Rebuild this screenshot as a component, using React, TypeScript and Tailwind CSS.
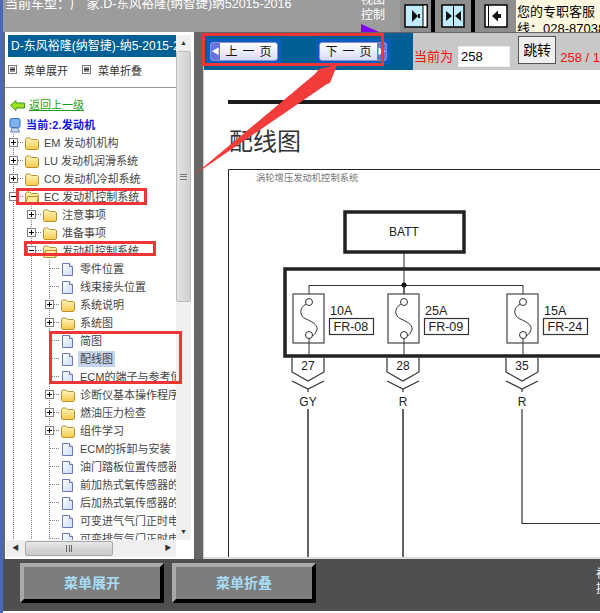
type TreeRow = {
  level: number;
  toggle?: "plus" | "minus";
  icon: "folder" | "open" | "doc";
  label: string;
  selected?: boolean;
};

const rows: TreeRow[] = [
  { level: 0, toggle: "plus", icon: "folder", label: "EM 发动机机构" },
  { level: 0, toggle: "plus", icon: "folder", label: "LU 发动机润滑系统" },
  { level: 0, toggle: "plus", icon: "folder", label: "CO 发动机冷却系统" },
  { level: 0, toggle: "minus", icon: "open", label: "EC 发动机控制系统" },
  { level: 1, toggle: "plus", icon: "folder", label: "注意事项" },
  { level: 1, toggle: "plus", icon: "folder", label: "准备事项" },
  { level: 1, toggle: "minus", icon: "open", label: "发动机控制系统" },
  { level: 2, icon: "doc", label: "零件位置" },
  { level: 2, icon: "doc", label: "线束接头位置" },
  { level: 2, toggle: "plus", icon: "folder", label: "系统说明" },
  { level: 2, toggle: "plus", icon: "folder", label: "系统图" },
  { level: 2, icon: "doc", label: "简图" },
  { level: 2, icon: "doc", label: "配线图", selected: true },
  { level: 2, icon: "doc", label: "ECM的端子与参考值" },
  { level: 2, toggle: "plus", icon: "folder", label: "诊断仪基本操作程序" },
  { level: 2, toggle: "plus", icon: "folder", label: "燃油压力检查" },
  { level: 2, toggle: "plus", icon: "folder", label: "组件学习" },
  { level: 2, icon: "doc", label: "ECM的拆卸与安装" },
  { level: 2, icon: "doc", label: "油门踏板位置传感器的" },
  { level: 2, icon: "doc", label: "前加热式氧传感器的检" },
  { level: 2, icon: "doc", label: "后加热式氧传感器的检" },
  { level: 2, icon: "doc", label: "可变进气气门正时电磁" },
  { level: 2, icon: "doc", label: "可变排气气门正时电磁" },
];

function GuideCell() {
  return (
    <svg width="18" height="18" className="shrink-0">
      <line x1="8.5" y1="0" x2="8.5" y2="18" stroke="#808080" strokeDasharray="1 1" />
    </svg>
  );
}

function ToggleCell({ toggle }: { toggle?: "plus" | "minus" }) {
  return (
    <svg width="18" height="18" className="shrink-0">
      <line x1="8.5" y1="0" x2="8.5" y2="18" stroke="#808080" strokeDasharray="1 1" />
      <line x1="9" y1="8.5" x2="18" y2="8.5" stroke="#808080" strokeDasharray="1 1" />
      {toggle && (
        <g>
          <rect x="4.5" y="4.5" width="8" height="8" fill="#fff" stroke="#808080" />
          <line x1="6" y1="8.5" x2="11" y2="8.5" stroke="#000" />
          {toggle === "plus" && <line x1="8.5" y1="6" x2="8.5" y2="11" stroke="#000" />}
        </g>
      )}
    </svg>
  );
}

function FolderIcon({ open }: { open?: boolean }) {
  return (
    <svg width="14" height="13" viewBox="0 0 14 13" className="shrink-0 ml-[2px]">
      <defs>
        <linearGradient id="fold" x1="0" y1="0" x2="0" y2="1">
          <stop offset="0" stopColor="#fff6c0" />
          <stop offset="1" stopColor="#f5c94a" />
        </linearGradient>
      </defs>
      <path d="M0.5 3 L1.5 1 H5 L6.5 2.5 H12.5 L13.5 3.5 V11.5 L12.5 12.5 H1.5 L0.5 11.5 Z" fill="url(#fold)" stroke="#b8912c" />
      {open && <path d="M0.5 12 L3 5.5 H13.5 L12 12.5 H1.5 Z" fill="#ffeea0" stroke="#b8912c" />}
    </svg>
  );
}

function DocIcon() {
  return (
    <svg width="14" height="13" viewBox="0 0 14 13" className="shrink-0 ml-[2px]">
      <defs>
        <linearGradient id="page" x1="0" y1="0" x2="1" y2="1">
          <stop offset="0" stopColor="#ffffff" />
          <stop offset="1" stopColor="#c4dcf8" />
        </linearGradient>
      </defs>
      <path d="M1.5 0.5 H8.5 L11.5 3.5 V12.5 H1.5 Z" fill="url(#page)" stroke="#6a78b8" />
      <path d="M8.5 0.5 V3.5 H11.5" fill="#fff" stroke="#6a78b8" />
    </svg>
  );
}

function Row({ row }: { row: TreeRow }) {
  return (
    <div className="flex items-center h-[18px] whitespace-nowrap">
      {row.level > 0 && <GuideCell />}
      {row.level > 1 && <GuideCell />}
      <ToggleCell toggle={row.toggle} />
      {row.icon === "doc" ? <DocIcon /> : <FolderIcon open={row.icon === "open"} />}
      <span className={row.selected ? "ml-[3px] px-[2px] bg-[#c5d5ee] text-[#444]" : "ml-[5px] text-[#444]"}>
        {row.label}
      </span>
    </div>
  );
}

function MenuGlyph() {
  return (
    <svg width="9" height="9" className="shrink-0">
      <rect x="0.5" y="0.5" width="8" height="8" fill="#fff" stroke="#777" />
      <path d="M2 3H7M2 4.5H7M2 6H7" stroke="#222" />
    </svg>
  );
}

function SideButton({ dir }: { dir: "right" | "both" | "left" }) {
  return (
    <svg width="24" height="24" viewBox="0 0 24 24">
      <rect x="1" y="1" width="22" height="22" fill={dir === "left" ? "#fff" : "#c0ecff"} stroke="#000" strokeWidth="1.5" />
      {dir === "right" && (
        <g>
          <rect x="19" y="1" width="4" height="22" fill="#fff" stroke="#000" strokeWidth="1" />
          <path d="M14 6 L8 12 L14 18Z M8 10H6V14H8Z" transform="translate(22 0) scale(-1 1)" fill="#111" />
        </g>
      )}
      {dir === "both" && (
        <g>
          <line x1="12.5" y1="1" x2="12.5" y2="23" stroke="#000" />
          <path d="M5 7 L11 12 L5 17Z M14 12 L20 7 V17Z" fill="#111" />
        </g>
      )}
      {dir === "left" && (
        <g>
          <line x1="4.5" y1="1" x2="4.5" y2="23" stroke="#000" />
          <path d="M8 12 L14 6.5 V10H17V14H14V17.5Z" fill="#111" />
        </g>
      )}
    </svg>
  );
}

function PageButton({ label, arrow }: { label: string; arrow: "left" | "right" }) {
  return (
    <div className="p-[3px] bg-[#0a5cc0]">
      <div className="flex items-center w-[68px] h-[19px] rounded-[3px] border border-[#8a90d8] bg-gradient-to-b from-[#ffffff] to-[#d8dcf6] text-[12px] text-[#111] overflow-hidden">
        {arrow === "left" && <span className="flex items-center justify-center w-[9px] h-full bg-[#6a72e0] text-white text-[8px]">◀</span>}
        <span className="flex-1 pl-[5px] text-center tracking-[5px]">{label}</span>
        {arrow === "right" && <span className="flex items-center justify-center w-[9px] h-full bg-[#6a72e0] text-white text-[8px]">▶</span>}
      </div>
    </div>
  );
}

function Fuse({ x, amp, code, boxX, ampX }: { x: number; amp: string; code: string; boxX: number; ampX: number }) {
  const left = x - 16;
  return (
    <g>
      <line x1={x} y1="285" x2={x} y2="298" stroke="#333" />
      <rect x={left} y="294" width="31" height="49" fill="#fff" stroke="#444" strokeWidth="1.2" />
      <circle cx={x} cy="302" r="3.5" fill="#fff" stroke="#333" />
      <circle cx={x} cy="335" r="3.5" fill="#fff" stroke="#333" />
      <path d={`M${x - 3} 304 C${x - 10} 308 ${x - 10} 316 ${x - 3} 319 C${x + 4} 322 ${x + 11} 326 ${x + 7} 332 C${x + 6} 334 ${x + 5} 335 ${x + 3} 336`} fill="none" stroke="#333" />
      <line x1={x} y1="338" x2={x} y2="357" stroke="#333" />
      <text x={ampX} y="315" fontSize="12.5" fill="#222">{amp}</text>
      <rect x={boxX} y="318.5" width="44" height="16" fill="#fff" stroke="#333" strokeWidth="1.2" />
      <text x={boxX + 4} y="331" fontSize="12.5" fill="#222">{code}</text>
    </g>
  );
}

function Connector({ x, pin, wire }: { x: number; pin: string; wire: string }) {
  return (
    <g fill="none" stroke="#333" strokeWidth="1.2">
      <path d={`M${x - 16} 358 V372 L${x} 381 L${x + 16} 372 V358`} />
      <path d={`M${x - 16} 381 L${x} 389 L${x + 16} 381 M${x} 389 V392`} />
      <text x={x} y="370" fontSize="12" fill="#222" stroke="none" textAnchor="middle">{pin}</text>
      <text x={x} y="406" fontSize="12" fill="#222" stroke="none" textAnchor="middle">{wire}</text>
    </g>
  );
}

function WiringDiagram() {
  return (
    <svg viewBox="228 169 372 388" width="372" height="388" className="block font-['Liberation_Sans','Noto_Sans_CJK_SC',sans-serif]">
      <path d="M228.5 557 V169.5 H600" fill="none" stroke="#222" />
      <text x="256" y="181" fontSize="9.3" fill="#777">涡轮增压发动机控制系统</text>
      <rect x="345" y="212" width="119" height="40" fill="#fff" stroke="#222" strokeWidth="3.5" />
      <text x="404" y="236" fontSize="12" fill="#222" textAnchor="middle">BATT</text>
      <line x1="404" y1="252" x2="404" y2="268" stroke="#222" />
      <rect x="285" y="269" width="330" height="87" fill="#fff" stroke="#222" strokeWidth="3.5" />
      <line x1="309" y1="285.5" x2="523" y2="285.5" stroke="#333" />
      <line x1="404" y1="268" x2="404" y2="296" stroke="#333" />
      <circle cx="404" cy="285" r="2.5" fill="#111" />
      <Fuse x={309} amp="10A" code="FR-08" boxX={329.5} ampX={330} />
      <Fuse x={404} amp="25A" code="FR-09" boxX={424.5} ampX={425} />
      <Fuse x={523} amp="15A" code="FR-24" boxX={543.5} ampX={544} />
      <Connector x={308} pin="27" wire="GY" />
      <Connector x={403} pin="28" wire="R" />
      <Connector x={522} pin="35" wire="R" />
      <path d="M308 409 V557 M403 409 V557" fill="none" stroke="#222" strokeWidth="1.4" />
      <path d="M522 409 V523.5 H600" fill="none" stroke="#333" strokeWidth="1.2" />
    </svg>
  );
}

export default function App() {
  return (
    <div className="relative flex w-[600px] h-[613px] overflow-hidden bg-white text-[11px] font-['Liberation_Sans','Noto_Sans_CJK_SC',sans-serif]">
      <div className="w-[3px] shrink-0 bg-[#4a68b4]" />

      <div className="flex-1 min-w-0 flex flex-col">
        {/* top bar */}
        <div className="flex h-[32px] shrink-0 bg-[#9c9c9c] overflow-hidden">
          <div className="w-[358px] pl-[2px] -mt-[6px] text-[13px] text-white whitespace-nowrap leading-[20px]">
            当前车型：广 家.<span className="text-[12.5px]">D-东风裕隆(纳智捷)纳52015-2016</span>
          </div>
          <div className="w-[39px] -mt-[7px] text-[12px] leading-[15px] text-white">
            <div>视图</div>
            <div>控制</div>
            <svg width="18" height="9" className="mt-[1px]">
              <path d="M0 0 L18 8 V9 H0 Z" fill="#8000f0" />
            </svg>
          </div>
          <div className="flex items-center justify-center w-[31px] bg-[#8e8e8e]">
            <SideButton dir="right" />
          </div>
          <div className="w-[4px] bg-black" />
          <div className="flex items-center justify-center w-[36px] bg-[#8e8e8e]">
            <SideButton dir="both" />
          </div>
          <div className="w-[4px] bg-black" />
          <div className="flex items-center justify-center w-[41px] bg-[#8e8e8e]">
            <SideButton dir="left" />
          </div>
          <div className="flex-1 bg-[#fff8e0] pl-[1px] pt-[3px] text-[13px] leading-[17px] text-black whitespace-nowrap overflow-hidden">
            <div>您的专职客服</div>
            <div>线：028-87038</div>
          </div>
        </div>

        {/* middle */}
        <div className="flex-1 min-h-0 flex bg-[#666] pl-[2px]">
          <div className="flex flex-col w-[189px] shrink-0 bg-white pt-[3px] pb-[2px]">
            <div className="flex-1 min-h-0 flex pr-[3px]">
              <div className="flex-1 min-w-0 overflow-hidden">
                <div className="ml-[3px] h-[22px] bg-[#005f94] pl-[3px] flex items-center text-[12px] text-white whitespace-nowrap overflow-hidden">
                  D-东风裕隆(纳智捷)-纳5-2015-2016
                </div>
                <div className="flex items-start h-[31px] pl-[3px] pt-[6px] border-b border-[#999] text-[#333] whitespace-nowrap">
                  <span className="mt-[2px]"><MenuGlyph /></span>
                  <span className="ml-[7px]">菜单展开</span>
                  <span className="ml-[14px] mt-[2px]"><MenuGlyph /></span>
                  <span className="ml-[7px]">菜单折叠</span>
                </div>
                <div className="flex items-center h-[22px] mt-[6px] pl-[5px]">
                  <svg width="15" height="11" viewBox="0 0 15 11">
                    <path d="M0.5 5.5 L6 0.5 V3 H14.5 V8 H6 V10.5 Z" fill="#9be01c" stroke="#3a9a10" />
                  </svg>
                  <span className="ml-[4px] text-[#1aa018] underline">返回上一级</span>
                </div>
                <div className="flex items-center h-[18px] pl-[4px]">
                  <svg width="12" height="15" viewBox="0 0 12 15">
                    <rect x="1" y="0.5" width="10" height="9" rx="1.5" fill="#7ab4f0" stroke="#3a68b8" />
                    <path d="M3 10 H9 L10.5 14 H1.5 Z" fill="#c8d8ee" stroke="#6a88b8" />
                  </svg>
                  <span className="ml-[5px] font-bold text-[#1414e6] tracking-[0.2px]">当前:2.发动机</span>
                </div>
                <div>
                  {rows.map((r) => (
                    <Row key={r.label} row={r} />
                  ))}
                </div>
              </div>

              {/* vertical scrollbar */}
              <div className="flex flex-col items-stretch w-[15px] shrink-0 bg-[#efefef]">
                <div className="flex items-center justify-center h-[16px] text-[7px] text-[#333]">▲</div>
                <div className="flex items-center justify-center h-[251px] rounded-[2px] border border-[#bdbdbd] bg-gradient-to-r from-[#e4e4e4] to-[#cfcfcf]">
                  <div className="w-[7px] h-[6px] border-y border-[#777] flex items-center">
                    <div className="w-full h-px bg-[#777]" />
                  </div>
                </div>
                <div className="flex-1" />
                <div className="flex items-center justify-center h-[16px] text-[7px] text-[#333]">▼</div>
              </div>
            </div>

            {/* horizontal scrollbar */}
            <div className="flex items-center h-[17px] shrink-0 ml-[1px] mr-[18px] bg-[#efefef]">
              <div className="flex items-center justify-center w-[19px] text-[7px] text-[#333]">◀</div>
              <div className="flex items-center justify-center w-[88px] h-[15px] rounded-[2px] border border-[#aaa] bg-gradient-to-b from-[#e8e8e8] to-[#c8c8c8]">
                <div className="w-[6px] h-[7px] border-x border-[#666] flex justify-center">
                  <div className="w-px h-full bg-[#666]" />
                </div>
              </div>
              <div className="flex-1" />
              <div className="flex items-center justify-center w-[16px] text-[7px] text-[#333]">▶</div>
            </div>
          </div>

          <div className="w-[9px] shrink-0" />

          {/* right content */}
          <div className="flex-1 min-w-0 flex flex-col border-l border-[#ccc] border-t-0 mt-[1px]">
            <div className="flex h-[37px] shrink-0">
              <div className="flex items-center w-[209px] shrink-0 bg-[#005f94] pl-[3px] gap-[35px]">
                <PageButton label="上一页" arrow="left" />
                <PageButton label="下一页" arrow="right" />
              </div>
              <div className="flex-1 min-w-0 flex items-end bg-[#c8c8c8] pl-[1px] pb-[3px] whitespace-nowrap overflow-hidden">
                <span className="text-[13px] text-[#f01010] leading-[20px]">当前为</span>
                <input
                  readOnly
                  value="258"
                  className="ml-[5px] w-[52px] h-[21px] bg-white border border-[#eee] pl-[2px] text-[13px] text-black outline-none"
                />
                <button className="ml-[8px] mb-[3px] w-[39px] h-[28px] bg-[#f0f0f0] border border-[#555] text-[14px] text-black">
                  跳转
                </button>
                <span className="ml-[4px] text-[13px] text-[#f01010] leading-[18px]">258 / 1</span>
              </div>
            </div>
            <div className="flex-1 min-h-0 bg-white pl-[24px] pt-[30px] border-b-2 border-[#ddd] overflow-hidden">
              <div className="h-[4px] bg-[#1c1c1c]" />
              <h2 className="mt-[23px] h-[42px] pl-[1px] text-[24px] leading-[30px] text-[#333]">配线图</h2>
              <WiringDiagram />
            </div>
          </div>
        </div>

        {/* bottom bar */}
        <div className="flex items-start h-[52px] shrink-0 mb-[2px] bg-[#4f4f4f] pl-[17px] pt-[4px] gap-[8px]">
          <button className="w-[144px] h-[40px] border-4 border-t-[#a9a9a9] border-l-[#a9a9a9] border-r-black border-b-black bg-[#7d7d7d] text-[14px] font-bold text-[#a8dcf5]">
            菜单展开
          </button>
          <button className="w-[144px] h-[40px] border-4 border-t-[#a9a9a9] border-l-[#a9a9a9] border-r-black border-b-black bg-[#7d7d7d] text-[14px] font-bold text-[#a8dcf5]">
            菜单折叠
          </button>
          <div className="ml-auto w-[4px] pt-[4px] overflow-hidden text-[12px] leading-[15px] text-white">
            <div>祝</div>
            <div>提</div>
          </div>
        </div>
      </div>

      {/* red annotations */}
      <div className="absolute left-[202px] top-[33px] w-[182px] h-[33px] border-[3px] border-[#ef3535]" />
      <div className="absolute left-[16px] top-[188px] w-[131px] h-[17px] border-[3px] border-[#ef3535]" />
      <div className="absolute left-[24px] top-[241px] w-[132px] h-[15px] border-[3px] border-[#ef3535]" />
      <div className="absolute left-[49px] top-[331px] w-[133px] h-[53px] border-[3px] border-[#ef3535]" />
      <svg className="absolute left-0 top-0 pointer-events-none" width="600" height="613">
        <polygon points="194,175 315,74 319,69 337,65 330,83 327,84" fill="#f23c3c" />
      </svg>
    </div>
  );
}
